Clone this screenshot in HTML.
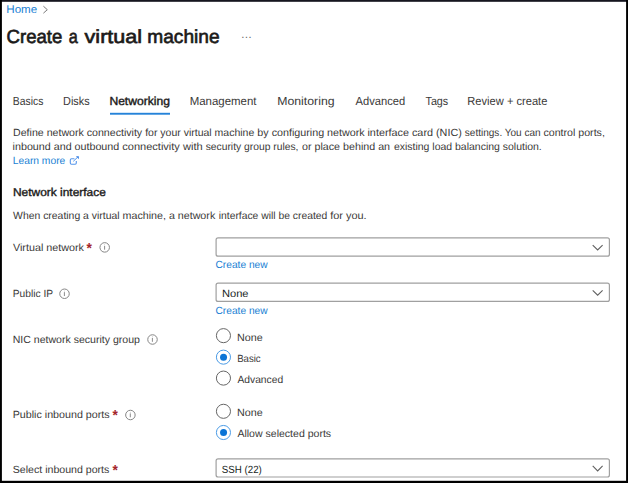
<!DOCTYPE html>
<html lang="en">
<head>
<meta charset="utf-8">
<title>Create a virtual machine</title>
<style>
html,body{margin:0;padding:0;}
body{width:628px;height:483px;overflow:hidden;background:#fff;position:relative;font-family:"Liberation Sans",sans-serif;color:#323130;text-rendering:geometricPrecision;}
#gfx{position:absolute;left:0;top:0;}
.grp{margin:0;padding:0;font-size:inherit;font-weight:normal;}
.t{position:absolute;white-space:nowrap;line-height:14px;transform-origin:0 50%;}
</style>
</head>
<body>
<svg id="gfx" width="628" height="483" viewBox="0 0 628 483">
<path d="M43.4 6.2 L47.3 9.7 L43.4 13.2" fill="none" stroke="#7a7a7a" stroke-width="1"/>
<rect x="110" y="112.8" width="60" height="1.9" fill="#2583d9"/>
<path d="M74.4 158.7 H71.5 Q70.3 158.7 70.3 159.9 V163.1 Q70.3 164.3 71.5 164.3 H75.1 Q76.3 164.3 76.3 163.1 V160.9" fill="none" stroke="#5596ec" stroke-width="1.1"/>
<path d="M73.3 161.3 L77.6 157.2" fill="none" stroke="#4a8fea" stroke-width="1"/><path d="M75.9 156.2 H78.9 V159.2 Z" fill="#3d84e6"/>
<rect x="216.10" y="237.80" width="393.30" height="18.40" rx="2" fill="#fff" stroke="#a0a0a0" stroke-width="1.2"/>
<path d="M592.7 245.05 L597.65 250.00 L602.6 245.05" fill="none" stroke="#606060" stroke-width="1.1"/>
<rect x="216.10" y="283.10" width="393.30" height="18.30" rx="2" fill="#fff" stroke="#a0a0a0" stroke-width="1.2"/>
<path d="M592.7 290.30 L597.65 295.25 L602.6 290.30" fill="none" stroke="#606060" stroke-width="1.1"/>
<rect x="216.10" y="458.80" width="393.30" height="18.20" rx="2" fill="#fff" stroke="#a0a0a0" stroke-width="1.2"/>
<path d="M592.7 465.90 L597.65 470.85 L602.6 465.90" fill="none" stroke="#606060" stroke-width="1.1"/>
<circle cx="223.45" cy="335.65" r="7.05" fill="#fff" stroke="#666" stroke-width="1"/>
<circle cx="223.45" cy="357.15" r="7.05" fill="#fff" stroke="#4a9be6" stroke-width="1"/><circle cx="223.55" cy="357.15" r="3.5" fill="#0b74d6"/>
<circle cx="223.45" cy="378.1" r="7.05" fill="#fff" stroke="#666" stroke-width="1"/>
<circle cx="223.45" cy="411.3" r="7.05" fill="#fff" stroke="#666" stroke-width="1"/>
<circle cx="223.45" cy="432.5" r="7.05" fill="#fff" stroke="#4a9be6" stroke-width="1"/><circle cx="223.55" cy="432.5" r="3.5" fill="#0b74d6"/>
<circle cx="104.7" cy="247.4" r="4.75" fill="none" stroke="#868686" stroke-width="1"/><path d="M104.60 245.80 V249.70" stroke="#7d7d7d" stroke-width="0.9"/><circle cx="104.60" cy="244.60" r="0.45" fill="#aaa"/>
<circle cx="64.5" cy="293.75" r="4.75" fill="none" stroke="#868686" stroke-width="1"/><path d="M64.40 292.15 V296.05" stroke="#7d7d7d" stroke-width="0.9"/><circle cx="64.40" cy="290.95" r="0.45" fill="#aaa"/>
<circle cx="152.5" cy="339.5" r="4.75" fill="none" stroke="#868686" stroke-width="1"/><path d="M152.40 337.90 V341.80" stroke="#7d7d7d" stroke-width="0.9"/><circle cx="152.40" cy="336.70" r="0.45" fill="#aaa"/>
<circle cx="130.4" cy="415.0" r="4.75" fill="none" stroke="#868686" stroke-width="1"/><path d="M130.30 413.40 V417.30" stroke="#7d7d7d" stroke-width="0.9"/><circle cx="130.30" cy="412.20" r="0.45" fill="#aaa"/>
<rect x="0" y="0" width="628" height="1.8" fill="#15151f"/>
<rect x="0" y="0" width="1.9" height="483" fill="#000"/>
<rect x="626.1" y="0" width="1.9" height="483" fill="#000"/>
<rect x="0" y="480.8" width="628" height="2.2" fill="#000"/>
</svg>
<div class="t" id="home" style="left:6.00px;top:3.42px;font-size:11.2px;color:#1a7fd4;transform:translateX(0.30px) scaleX(1.0348);">Home</div>
<h1 class="grp">
<span class="t" id="ti1" style="left:7.00px;top:31.42px;font-size:19.0px;-webkit-text-stroke:0.65px #1b1a19;color:#1b1a19;transform:translateX(-0.40px) scaleX(0.9763);">Create</span>
<span class="t" id="ti2" style="left:69.00px;top:31.42px;font-size:19.0px;-webkit-text-stroke:0.65px #1b1a19;color:#1b1a19;transform:translateX(-0.25px) scaleX(0.8548);">a</span>
<span class="t" id="ti3" style="left:85.00px;top:31.42px;font-size:19.0px;-webkit-text-stroke:0.65px #1b1a19;color:#1b1a19;transform:translateX(-0.44px) scaleX(1.1350);">virtual</span>
<span class="t" id="ti4" style="left:147.00px;top:31.42px;font-size:19.0px;-webkit-text-stroke:0.65px #1b1a19;color:#1b1a19;transform:translateX(0.28px) scaleX(1.0074);">machine</span>
</h1>
<div class="t" id="tab1" style="left:13.00px;top:93.91px;font-size:11.8px;color:#3a3938;transform:translateX(-0.19px) scaleX(0.8791);">Basics</div>
<div class="t" id="tab2" style="left:63.00px;top:93.91px;font-size:11.8px;color:#3a3938;transform:translateX(0.07px) scaleX(0.9240);">Disks</div>
<div class="t" id="tab3" style="left:109.00px;top:93.91px;font-size:11.8px;-webkit-text-stroke:0.40px #1b1a19;color:#1b1a19;transform:translateX(0.39px) scaleX(1.0260);">Networking</div>
<div class="t" id="tab4" style="left:190.00px;top:93.91px;font-size:11.8px;color:#3a3938;transform:translateX(-0.35px) scaleX(0.9701);">Management</div>
<div class="t" id="tab5" style="left:277.00px;top:93.91px;font-size:11.8px;color:#3a3938;transform:translateX(0.24px) scaleX(1.0404);">Monitoring</div>
<div class="t" id="tab6" style="left:355.00px;top:93.91px;font-size:11.8px;color:#3a3938;transform:translateX(0.50px) scaleX(0.9477);">Advanced</div>
<div class="t" id="tab7" style="left:426.00px;top:93.91px;font-size:11.8px;color:#3a3938;transform:translateX(-0.49px) scaleX(0.9118);">Tags</div>
<div class="t" id="tab8" style="left:467.00px;top:93.91px;font-size:11.8px;color:#3a3938;transform:translateX(0.34px) scaleX(0.9428);">Review + create</div>
<p class="grp">
<span class="t" id="d1a" style="left:13.00px;top:126.70px;font-size:10.4px;color:#3a3938;transform:translateX(0.02px) scaleX(1.0212);">Define network connectivity</span>
<span class="t" id="d1b" style="left:145.00px;top:126.70px;font-size:10.4px;color:#3a3938;transform:translateX(0.13px) scaleX(1.0105);">for your virtual machine</span>
<span class="t" id="d1c" style="left:257.00px;top:126.70px;font-size:10.4px;color:#3a3938;transform:translateX(0.34px) scaleX(1.0319);">by configuring network</span>
<span class="t" id="d1d" style="left:368.00px;top:126.70px;font-size:10.4px;color:#3a3938;transform:translateX(-0.54px) scaleX(1.0410);">interface card (NIC)</span>
<span class="t" id="d1e" style="left:465.00px;top:126.70px;font-size:10.4px;color:#3a3938;transform:translateX(-0.17px) scaleX(0.9648);">settings. You can</span>
<span class="t" id="d1f" style="left:543.00px;top:126.70px;font-size:10.4px;color:#3a3938;transform:translateX(0.45px) scaleX(1.0227);">control ports,</span>
<span class="t" id="d2a" style="left:13.00px;top:141.40px;font-size:10.4px;color:#3a3938;transform:translateX(-0.38px) scaleX(1.0308);">inbound and outbound</span>
<span class="t" id="d2b" style="left:122.00px;top:141.40px;font-size:10.4px;color:#3a3938;transform:translateX(0.22px) scaleX(1.0623);">connectivity with</span>
<span class="t" id="d2c" style="left:206.00px;top:141.40px;font-size:10.4px;color:#3a3938;transform:translateX(-0.31px) scaleX(0.9911);">security group rules,</span>
<span class="t" id="d2d" style="left:302.00px;top:141.40px;font-size:10.4px;color:#3a3938;transform:scaleX(1.0296);">or place behind an</span>
<span class="t" id="d2e" style="left:394.00px;top:141.40px;font-size:10.4px;color:#3a3938;transform:translateX(-0.10px) scaleX(1.0078);">existing load balancing solution.</span>
</p>
<div class="t" id="d3" style="left:13.00px;top:154.80px;font-size:10.4px;color:#1a7fd4;transform:translateX(-0.25px) scaleX(0.9883);">Learn more</div>
<div class="t" id="h2" style="left:13.00px;top:185.55px;font-size:11.4px;-webkit-text-stroke:0.39px #1b1a19;color:#1b1a19;transform:translateX(-0.04px) scaleX(1.0477);">Network interface</div>
<p class="grp">
<span class="t" id="d4a" style="left:13.00px;top:210.00px;font-size:10.4px;color:#3a3938;transform:translateX(0.07px) scaleX(1.0018);">When creating a virtual</span>
<span class="t" id="d4b" style="left:123.00px;top:210.00px;font-size:10.4px;color:#3a3938;transform:translateX(-0.46px) scaleX(1.0287);">machine, a network</span>
<span class="t" id="d4c" style="left:219.00px;top:210.00px;font-size:10.4px;color:#3a3938;transform:translateX(-0.27px) scaleX(0.9947);">interface will be created</span>
<span class="t" id="d4d" style="left:330.00px;top:210.00px;font-size:10.4px;color:#3a3938;transform:translateX(0.20px) scaleX(1.0500);">for you.</span>
</p>
<div class="t" id="l1" style="left:13.00px;top:242.40px;font-size:10.4px;color:#3a3938;transform:translateX(-0.04px) scaleX(1.0360);">Virtual network</div>
<div class="t" id="c1" style="left:215.00px;top:258.90px;font-size:10.4px;color:#1a7fd4;transform:translateX(0.45px) scaleX(0.9825);">Create new</div>
<div class="t" id="l2" style="left:13.00px;top:288.40px;font-size:10.4px;color:#3a3938;transform:translateX(-0.25px) scaleX(0.9837);">Public IP</div>
<div class="t" id="s2" style="left:222.00px;top:288.40px;font-size:10.4px;color:#201f1e;transform:translateX(-0.05px) scaleX(1.0705);">None</div>
<div class="t" id="c2" style="left:215.00px;top:305.40px;font-size:10.4px;color:#1a7fd4;transform:translateX(0.45px) scaleX(0.9825);">Create new</div>
<div class="t" id="l3" style="left:13.00px;top:334.40px;font-size:10.4px;color:#3a3938;transform:translateX(-0.32px) scaleX(1.0158);">NIC network security group</div>
<div class="t" id="r1" style="left:237.00px;top:332.00px;font-size:10.4px;color:#3a3938;transform:translateX(0.11px) scaleX(1.0343);">None</div>
<div class="t" id="r2" style="left:237.00px;top:353.10px;font-size:10.4px;color:#3a3938;transform:translateX(0.15px) scaleX(0.9247);">Basic</div>
<div class="t" id="r3" style="left:237.00px;top:374.00px;font-size:10.4px;color:#3a3938;transform:translateX(0.42px) scaleX(0.9890);">Advanced</div>
<div class="t" id="l4" style="left:13.00px;top:409.40px;font-size:10.4px;color:#3a3938;transform:translateX(-0.30px) scaleX(1.0289);">Public inbound ports</div>
<div class="t" id="r4" style="left:237.00px;top:407.00px;font-size:10.4px;color:#3a3938;transform:translateX(0.11px) scaleX(1.0343);">None</div>
<div class="t" id="r5" style="left:237.00px;top:428.20px;font-size:10.4px;color:#3a3938;transform:translateX(0.40px) scaleX(1.0144);">Allow selected ports</div>
<div class="t" id="l5" style="left:13.00px;top:464.00px;font-size:10.4px;color:#3a3938;transform:translateX(-0.22px) scaleX(1.0192);">Select inbound ports</div>
<div class="t" id="s3" style="left:222.00px;top:464.40px;font-size:10.4px;color:#201f1e;transform:translateX(-0.22px) scaleX(0.9373);">SSH (22)</div>
<div class="t" id="st1" style="left:86.00px;top:241.78px;font-size:14.5px;font-weight:bold;color:#a4262c;transform:translateX(0.53px) scaleX(0.9498);">*</div>
<div class="t" id="st4" style="left:112.00px;top:409.18px;font-size:14.5px;font-weight:bold;color:#a4262c;transform:translateX(0.53px) scaleX(0.9489);">*</div>
<div class="t" id="st5" style="left:112.00px;top:463.58px;font-size:14.5px;font-weight:bold;color:#a4262c;transform:translateX(0.53px) scaleX(0.9489);">*</div>
<div class="t" id="dots" style="left:241.00px;top:28.02px;font-size:11.5px;color:#6a6a6a;transform:translateX(-0.17px) scaleX(0.9863);">…</div>
</body>
</html>
